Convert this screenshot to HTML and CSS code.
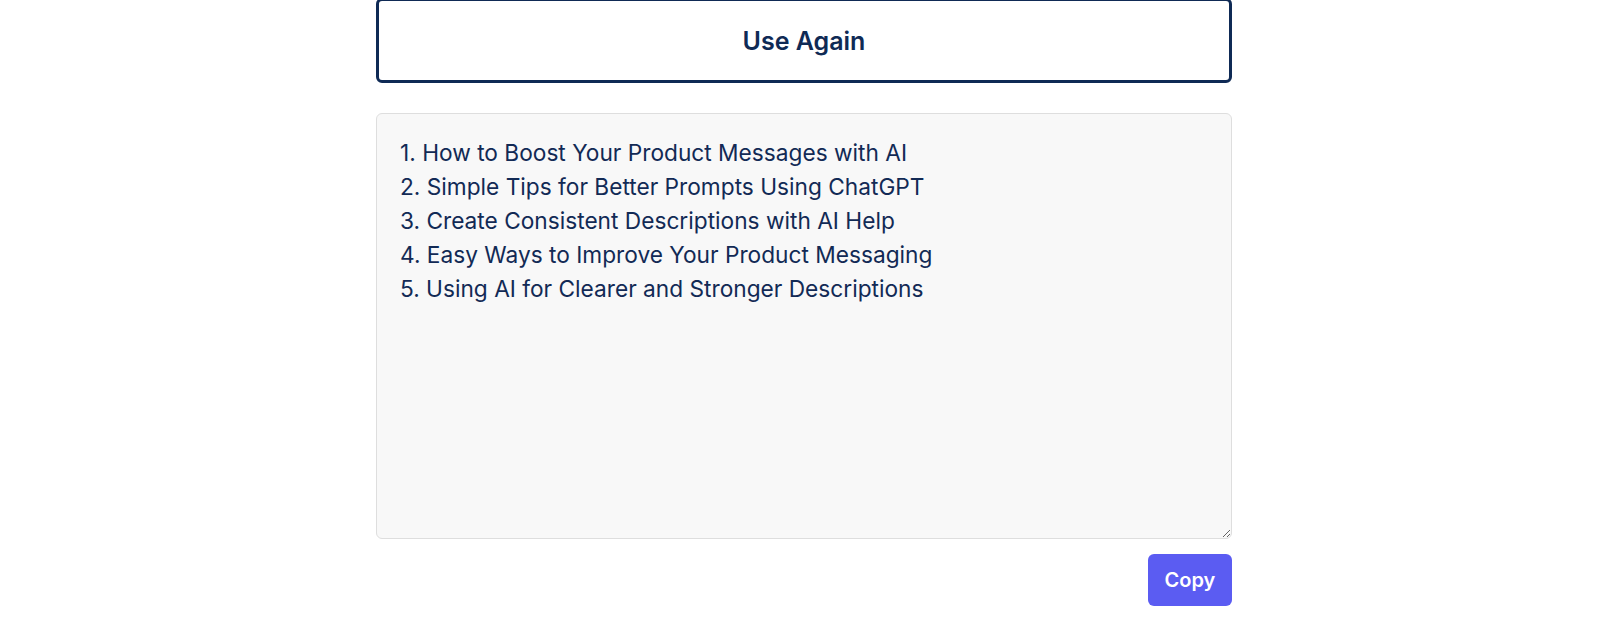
FILE: index.html
```html
<!DOCTYPE html>
<html lang="en">
<head>
    <meta charset="UTF-8">
    <meta name="viewport" content="width=device-width, initial-scale=1.0">
    <title>Title Generator</title>

    <link rel="stylesheet" href="styles.css">
</head>
<body>
    <div class="page">
        <div class="container">
            <button type="button" class="again-btn">Use Again</button>

            <textarea class="result" id="result" readonly>1. How to Boost Your Product Messages with AI
2. Simple Tips for Better Prompts Using ChatGPT
3. Create Consistent Descriptions with AI Help
4. Easy Ways to Improve Your Product Messaging
5. Using AI for Clearer and Stronger Descriptions</textarea>

            <div class="actions">
                <button type="button" class="copy-btn" id="copyBtn">Copy</button>
            </div>
        </div>
    </div>
</body>
</html>
```

FILE: styles.css
```css
body {
    background-color: #fff;
    font-family: Inter, "Noto Sans", sans-serif;
    color: #13294f;
    margin: 0;
    padding: 0;
}

.page {
    padding-left: 8px;
}

.container {
    width: 856px;
    margin: 0 auto;
    margin-top: -2px;
    display: flex;
    flex-direction: column;
}

.again-btn {
    height: 85px;
    background-color: #fff;
    border: 3px solid #0f2a55;
    border-radius: 6px;
    font-family: Inter, sans-serif;
    font-size: 25px;
    font-weight: 600;
    color: #0f2a55;
    cursor: pointer;
}

.result {
    margin-top: 30px;
    height: 426px;
    box-sizing: border-box;
    padding: 22px 21px 20px 23px;
    background-color: #f8f8f8;
    border: 1px solid #dedede;
    border-radius: 6px;
    font-family: Inter, sans-serif;
    font-size: 22.7px;
    line-height: 34px;
    color: #122a55;
    resize: vertical;
    outline: none;
}

.actions {
    display: flex;
    justify-content: flex-end;
    margin-top: 15px;
}

.copy-btn {
    width: 84px;
    height: 52px;
    background-color: #5b5cf2;
    color: #fff;
    border: none;
    border-radius: 6px;
    font-family: Inter, sans-serif;
    font-size: 20px;
    font-weight: 600;
    cursor: pointer;
}
```
